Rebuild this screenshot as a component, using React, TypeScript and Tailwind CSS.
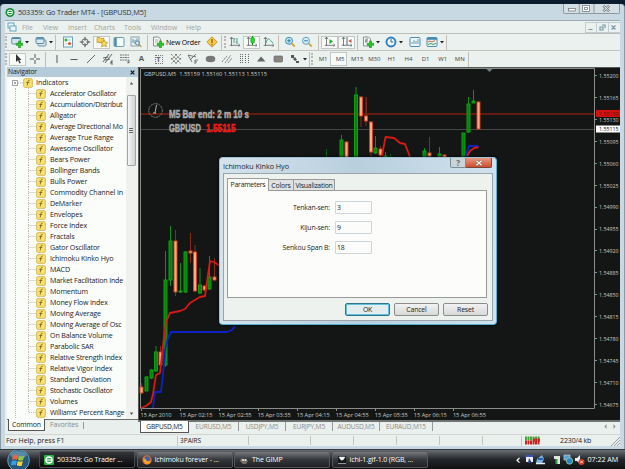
import type { ReactNode } from "react"
import clsx from "clsx"

const indicators = [
  "Accelerator Oscillator", "Accumulation/Distribut", "Alligator", "Average Directional Mo", "Average True Range",
  "Awesome Oscillator", "Bears Power", "Bollinger Bands", "Bulls Power", "Commodity Channel In", "DeMarker",
  "Envelopes", "Force Index", "Fractals", "Gator Oscillator", "Ichimoku Kinko Hyo", "MACD", "Market Facilitation Inde",
  "Momentum", "Money Flow Index", "Moving Average", "Moving Average of Osc", "On Balance Volume", "Parabolic SAR",
  "Relative Strength Index", "Relative Vigor Index", "Standard Deviation", "Stochastic Oscillator", "Volumes",
  "Williams' Percent Range",
]

const prices = ["1.55200", "1.55165", "1.55130", "1.55095", "1.55060", "1.55025", "1.54990", "1.54955", "1.54920", "1.54885", "1.54850", "1.54815", "1.54780", "1.54745", "1.54710", "1.54675"]
const times = ["15 Apr 2010", "15 Apr 02:15", "15 Apr 02:55", "15 Apr 03:35", "15 Apr 04:15", "15 Apr 04:55", "15 Apr 05:35", "15 Apr 06:15", "15 Apr 06:55"]

// x, wick top, body top, body bottom, wick bottom, up
const candles: [number, number, number, number, number, boolean][] = [
  [141.5, 383, 387, 393, 394, false],
  [146.5, 376, 377, 391, 391, true],
  [151.5, 369, 370, 378, 379, true],
  [156, 346, 352, 371, 372, true],
  [160.5, 346, 352, 365, 371, false],
  [165.5, 251, 280, 365, 367, true],
  [170.5, 226, 241, 280, 286, true],
  [175.5, 230, 241, 292, 296, false],
  [180.5, 263, 291, 292, 293, true],
  [185.5, 251, 252, 292, 293, true],
  [190.5, 233, 251, 253, 263, false],
  [195, 245, 252, 291, 292, false],
  [200, 268, 285, 293, 294, true],
  [204.5, 285, 286, 290, 291, false],
  [209.5, 256, 277, 289, 290, true],
  [214.5, 258, 277, 280, 281, false],
  [341.5, 135, 140, 160, 160, true],
  [346.5, 141, 142, 160, 160, false],
  [356, 87, 95, 160, 160, true],
  [361, 96, 97, 116, 127, false],
  [366, 97, 116, 121, 126, false],
  [371, 121, 122, 152, 158, false],
  [375.5, 136, 148, 153, 154, true],
  [380.5, 146, 149, 155, 158, false],
  [385.5, 152, 156, 160, 160, true],
  [424.5, 148, 151, 157, 160, true],
  [429.5, 137, 153, 156, 160, false],
  [439.5, 147, 154, 156, 160, true],
  [444.5, 154, 155, 157, 160, false],
  [463.5, 133, 133, 160, 160, true],
  [468.5, 97, 104, 132, 133, true],
  [473.5, 90, 101, 103, 103, true],
  [478.5, 101, 102, 129, 130, false],
]

const Icon = ({ children, on }: { children: ReactNode; on?: boolean }) => (
  <span className={clsx("flex h-[13px] w-[17px] shrink-0 items-center justify-center", on && "border border-[#c3c7c7] bg-[#f8faf8]")}>
    <svg width="12" height="12" viewBox="0 0 12 12" className="shrink-0" fill="none">{children}</svg>
  </span>
)

const Caret = () => (
  <svg width="4" height="4" viewBox="0 0 4 4" className="shrink-0"><path d="M0 1h4L2 3.4z" fill="#222" /></svg>
)

const Sep = () => <i className="h-[15px] w-px shrink-0 bg-[#c4bdb5]" />
const Grip = () => <i className="h-[12px] w-[2px] shrink-0 border-l-2 border-dotted border-[#b9b6b0]" />

const Plus = () => <path d="M7.500 5h2v2.300h2.300v2H9.500v2.400h-2V9.300H5.200v-2h2.300z" fill="#22cc22" stroke="#168a16" strokeWidth=".6" />
const Axes = () => <path d="M2.500 1v9M.8 9.300h10M1 3l1.500-2L4 3M9.500 8l1.500 1.300-1.500 1.300" stroke="#6d7373" strokeWidth=".9" />

const MainToolbar = () => (
  <div className="flex h-[17px] items-center border-t border-[#bdbdb8] bg-[#ebf1ee]">
    <Grip />
    <span className="flex w-[18px] items-center justify-end">
      <Icon><rect x=".7" y="1.500" width="9" height="6.500" rx="1" fill="#cfe4ee" stroke="#6792a5" /><path d="M1 2.500h8" stroke="#4b86a3" /><Plus /></Icon>
    </span>
    <Caret />
    <span className="ml-[3px] flex items-center">
      <Icon><rect x="3" y="4" width="8" height="6" rx="1" fill="#d8e8ef" stroke="#6f91a0" /><rect x="1" y="1.500" width="8" height="6" rx="1" fill="#d8e8ef" stroke="#5e8ba0" /><path d="M1 2.800h8" stroke="#5e96b3" strokeWidth="1.500" /></Icon>
    </span>
    <Caret />
    <span className="ml-[2px] mr-[3px] flex"><Sep /></span>
    <Icon><rect x="1.500" y="1" width="9" height="10" fill="#f6fbfb" stroke="#6ba0b4" /><circle cx="4" cy="4" r="1.500" fill="#2fae3c" /><circle cx="7.500" cy="7.500" r="1.600" fill="#e4542f" /><path d="M6 4h3M3 8h2" stroke="#7fb0c3" strokeWidth=".7" /></Icon>
    <Icon><circle cx="6" cy="6" r="3.200" stroke="#666" /><path d="M6 .8v4M6 7.200v4M.8 6h4M7.200 6h4" stroke="#555" /></Icon>
    <Icon on><path d="M1 1.500h3l1 1h3v4H1z" fill="#f3cf4a" stroke="#b5912b" strokeWidth=".7" /><path d="M8 4l1.200 2.200 2.500.3-1.800 1.800.4 2.500L8 9.600l-2.300 1.200.4-2.500-1.800-1.800 2.500-.3z" fill="#fbdc5a" stroke="#aa8a28" strokeWidth=".7" /></Icon>
    <Icon><rect x="1" y="1.500" width="10" height="9" rx="1" fill="#f5fafb" stroke="#6d9bb0" /><path d="M2.500 2v8" stroke="#4489ad" strokeWidth="2.400" /></Icon>
    <Icon><rect x="1" y="1" width="8" height="9" fill="#e7eff1" stroke="#8ba4ad" /><path d="M3 3v4M5 4v4M7 2.500v3" stroke="#5f8ea5" /><circle cx="7.500" cy="7" r="2" stroke="#6788a0" /><path d="M9 8.500l2.300 2.300" stroke="#b99b45" strokeWidth="1.400" /></Icon>
    <span className="ml-[3px] mr-[1px] flex"><Sep /></span>
    <Icon><path d="M1.500 1h5l2 2v7h-7z" fill="#f4f7f5" stroke="#777" strokeWidth=".8" /><path d="M3 4h4M3 6h3" stroke="#999" strokeWidth=".7" /><Plus /></Icon>
    <span className="w-[37px] shrink-0 whitespace-nowrap text-[7px] tracking-[-0.160px] text-black">New Order</span>
    <Icon><path d="M6 .8L11.200 6 6 11.200.8 6z" fill="#f7ca47" stroke="#c7952b" /><path d="M6 3v4M6 8v1.300" stroke="#89651b" strokeWidth="1.300" /></Icon>
    <span className="ml-[1px] mr-[2px] flex"><Sep /></span>
    <Grip />
    <Icon><Axes /><path d="M5 2v5M5 3h1.300M8 2v6M6.700 6H8" stroke="#3e9484" strokeWidth=".9" /></Icon>
    <Icon on><Axes /><path d="M6.500 0v9" stroke="#168d1b" /><rect x="4.800" y="1.500" width="3.600" height="5.500" rx="1" fill="#27dc2b" stroke="#168d1b" strokeWidth=".6" /></Icon>
    <Icon><Axes /><path d="M3 7c1.500-5 3-5 4.500-2.500L10 7" stroke="#4d9b8b" /></Icon>
    <span className="ml-[1px] mr-[2px] flex"><Sep /></span>
    <Icon><circle cx="5" cy="4.800" r="3.500" fill="#cce9f6" stroke="#3989b3" /><path d="M5 3v3.600M3.200 4.800h3.600" stroke="#26749d" /><path d="M7.800 7.500l3 3" stroke="#d2ac42" strokeWidth="2" /></Icon>
    <Icon><circle cx="5" cy="4.800" r="3.500" fill="#d8edf6" stroke="#5b9fc1" /><path d="M3.200 4.800h3.600" stroke="#26749d" /><path d="M7.800 7.500l3 3" stroke="#d2ac42" strokeWidth="2" /></Icon>
    <span className="ml-[3px] mr-[2px] flex"><Sep /></span>
    <Icon on><Axes /><path d="M5.500 3v5l3.500-2.500z" fill="#1eaa29" /></Icon>
    <Icon on><Axes /><path d="M6 1v8" stroke="#4c6b78" /><path d="M10.500 3v4L7.300 5z" fill="#d05a45" /></Icon>
    <span className="ml-[2px] mr-[1px] flex"><Sep /></span>
    <Icon><path d="M1.500 1h5l2 2v7h-7z" fill="#f4f7f5" stroke="#777" strokeWidth=".8" /><path d="M4 7V3h2M3 5h3" stroke="#666" strokeWidth=".8" /><Plus /></Icon>
    <Caret />
    <span className="ml-[2px] flex items-center">
      <Icon><circle cx="6" cy="6" r="4.500" fill="#edf8fd" stroke="#2d7fc4" strokeWidth="1.900" /><path d="M6 3v3h2.300" stroke="#466" /></Icon>
    </span>
    <Caret />
    <span className="ml-[3px] flex items-center">
      <Icon><rect x="1" y="1.500" width="10" height="9" rx="1" fill="#edf7fb" stroke="#4f8cab" /><path d="M3 8V6M5 8V4M7 8V5M9 8V3" stroke="#6b9ab0" /></Icon>
      <Icon><rect x="1" y="1.500" width="10" height="9" rx="1" fill="#edf7fb" stroke="#4f8cab" /><path d="M1 2.800h10" stroke="#438bb5" strokeWidth="2" /><path d="M2 6l2-1 2 1 3-1.500" stroke="#c6603d" /><path d="M2 8.500l3-1 2 1 3-1" stroke="#3d9a47" /></Icon>
    </span>
    <Caret />
    <span className="ml-[2px] flex"><Sep /></span>
  </div>
)

const LineToolbar = () => (
  <div className="flex h-[17px] items-center border-t border-[#c6c3bd] bg-[#ebf1ee]">
    <Grip />
    <span className="ml-[2px] flex"><Icon on><path d="M4 1v8l2-1.700 1.500 3.200 1.300-.6-1.500-3H9.500z" fill="#333" /></Icon></span>
    <Icon><path d="M6 1v4M6 7v4M1 6h4M7 6h4" stroke="#555" /></Icon>
    <span className="ml-[2px] mr-[2px] flex"><Sep /></span>
    <Icon><path d="M6 2v8" stroke="#555" /></Icon>
    <Icon><path d="M2.500 6.500h7" stroke="#555" /></Icon>
    <Icon><path d="M2 10l8-8" stroke="#666" /></Icon>
    <Icon><path d="M1 9l6-8M3 10l7-9M1 5l5-1M3 7l5-1M9 8v3M9 8h2M9 9.500h1.500M9 11h2" stroke="#555" strokeWidth=".9" /></Icon>
    <Icon><path d="M1 2h9M1 4.500h9M1 7h9M9 8v3M9 8h2M9 9.500h1.500" stroke="#6a6a6a" strokeWidth=".9" strokeDasharray="2 .5" /></Icon>
    <span className="w-[17px] text-center font-['Liberation_Sans'] text-[8px] font-bold text-[#555]">A</span>
    <span className="flex w-[17px] justify-center"><b className="h-[9px] w-[8px] border border-dotted border-[#777] text-center font-['Liberation_Sans'] text-[7px] leading-[8px] text-[#555]">T</b></span>
    <Icon><path d="M1 1l10 10M1 5l6 6M5 1l6 6M11 1L1 11M7 1L1 7M11 5l-6 6" stroke="#777" strokeDasharray="1.400 .6" /></Icon>
    <Icon><path d="M1 2l8 2M1 2l4 7M3 7l6-6M8 7v4M8 7h3M8 9h2" stroke="#666" strokeWidth=".9" /></Icon>
    <Icon><ellipse cx="6.500" cy="6" rx="4.800" ry="3.300" fill="#777" /></Icon>
    <Icon><path d="M1 9l5-6M4 10l6-8M7 10l4-5" stroke="#777" strokeDasharray="1.500 .5" /></Icon>
    <Icon><path d="M2.500 1v10M4.500 1v10M7.500 1v10M10.500 1v10" stroke="#666" strokeDasharray="1 1" /></Icon>
    <Icon><path d="M2 8.500l4-5 4.500 5z" fill="#666" /></Icon>
    <Icon><rect x="2" y="3" width="8.500" height="6" rx="1" fill="#8b8582" stroke="#666" strokeWidth=".7" /></Icon>
    <Icon><path d="M2 2h3v3H2zM4 6l2-2 2 3-2 1zM7 8h3v2H7z" fill="#555" /></Icon>
    <Caret />
    <span className="ml-[2px] mr-[1px] flex"><Sep /></span>
    <Grip />
    {["M1", "M5", "M15", "M30", "H1", "H4", "D1", "W1", "MN"].map((tf) => (
      <span key={tf} className={clsx("flex h-[14px] w-[17.100px] shrink-0 items-center justify-center pl-[3px] text-[6px] text-[#444]", tf === "M5" && "border border-[#c3c7c7] bg-[#f8faf8]")}>{tf}</span>
    ))}
    <span className="ml-[1px] flex"><Sep /></span>
  </div>
)

const IndicatorIcon = () => (
  <svg width="10" height="10" viewBox="0 0 10 10" className="shrink-0">
    <rect x=".7" y=".7" width="8.600" height="8.600" rx="1" fill="#f9e272" stroke="#d3b44a" strokeWidth=".9" />
    <path d="M6.700 2.300c-1.300-.4-1.600.3-1.800 1.500L4.200 7.500M3.300 4.500h3" fill="none" stroke="#7d661f" strokeWidth=".9" />
  </svg>
)

const Navigator = () => (
  <aside className="flex w-[131px] shrink-0 flex-col">
    <header className="flex h-[10px] items-center justify-between bg-[#b5cbda] pl-[1px] pr-[3px] text-[6.700px] tracking-[-0.150px] text-[#222]">
      Navigator
      <svg width="5" height="5" viewBox="0 0 5 5"><path d="M.7.7l3.600 3.600M4.300.7L.7 4.300" stroke="#111" strokeWidth="1.200" /></svg>
    </header>
    <div className="flex h-[342px] bg-[#fbfdfa]">
      <div className="w-[119px] overflow-hidden">
        <div className="flex h-[11px] items-center pl-[5px] text-[7.100px] tracking-[-0.060px] text-[#222]">
          <svg width="11" height="10" viewBox="0 0 11 10"><rect x=".5" y="2.500" width="5" height="5" fill="#fff" stroke="#9ca6aa" /><path d="M2 5h2" stroke="#555" /><path d="M6 5h5" stroke="#bbb" strokeDasharray="1 1" /></svg>
          <IndicatorIcon />
          <span className="ml-[3px]">Indicators</span>
        </div>
        <div className="ml-[7.500px] border-l border-dotted border-[#c0b8b0]">
          {indicators.map((name, i) => (
            <div key={name} className="flex h-[11px] items-center text-[7.100px] tracking-[-0.130px] text-[#222]">
              <svg width="20" height="11" viewBox="0 0 20 11" className="shrink-0">
                <path d={i === indicators.length - 1 ? "M12.500 0v5.500h7" : "M12.500 0v11M12.500 5.500h7"} fill="none" stroke="#c0b8b0" strokeDasharray="1 1" />
              </svg>
              <IndicatorIcon />
              <span className={clsx("ml-[4.500px] whitespace-nowrap", name.length > 20 && "tracking-[-0.190px]")}>{name}</span>
            </div>
          ))}
        </div>
      </div>
      <div className="flex w-[10px] flex-col items-center bg-[#eef1ee]">
        <svg width="5" height="18" viewBox="0 0 5 18"><path d="M.8 7.500L2.500 5l1.700 2.500z" fill="#555" /></svg>
        <div className="flex h-[71px] w-[9px] flex-col items-center justify-center gap-px rounded-[1px] border border-[#a0a5a7] bg-gradient-to-r from-[#f6f6f6] to-[#cfd3d5]">
          <i className="h-px w-[4px] bg-[#666]" /><i className="h-px w-[4px] bg-[#666]" /><i className="h-px w-[4px] bg-[#666]" />
        </div>
        <svg width="5" height="5" viewBox="0 0 5 5" className="mb-[3px] mt-auto"><path d="M.8 1.500h3.500L2.500 4z" fill="#555" /></svg>
      </div>
      <i className="w-[2px] bg-[#eef1ee]" />
    </div>
    <div className="flex h-[15px] border-t border-[#6e6e6e] bg-[#e9efec] text-[6.900px] leading-[10px] tracking-[-0.100px]">
      <span className="-mt-px ml-[1px] h-[12px] w-[37px] border border-t-0 border-[#555] bg-[#fcfdfb] text-center leading-[11px] text-[#222]">Common</span>
      <span className="ml-[5px] text-[#8a8a86]">Favorites</span>
      <i className="ml-[5px] mt-[2px] h-[7px] w-px bg-[#999]" />
    </div>
  </aside>
)

const Chart = () => (
  <svg width="482" height="353" viewBox="138 67 482 353" className="block font-['Open_Sans',sans-serif]">
    <rect x="138" y="67" width="482" height="353" fill="#131615" />
    <path d="M138.500 420V67.500H620" fill="none" stroke="#555855" />
    <path d="M140.500 408.500V68.500H594.500V408.500Z" fill="none" stroke="#8b8d8b" />
    <path d="M141 114h453" stroke="#641c10" strokeWidth="2" />
    <path d="M141 129.500h453" stroke="#444846" />
    <path d="M486.500 69h6l-3 3z" fill="#72818e" />
    <path d="M366.500 97v19M190.500 233v30M219.500 280v19" stroke="#702415" />
    <path d="M326.500 149v8M390.500 154v4" stroke="#0b5e10" />
    {candles.map(([x, wt, bt, bb, wb, up]) => (
      <g key={x}>
        <path d={`M${x} ${wt}V${wb}`} stroke={up ? "#0c930f" : "#8c2a19"} />
        <rect x={x - 1.5} y={bt} width="3" height={bb - bt} fill={up ? "#0a7f10" : "#ffab7d"} stroke={up ? "#0cab10" : "#ce4429"} strokeWidth=".9" />
      </g>
    ))}
    <g fill="none" strokeWidth="1.800" strokeLinejoin="round">
      <path d="M153 408L155 392H161L163 375L165 350L168 338L171 332H227L232 330L235 326" stroke="#0c22c4" />
      <path d="M465 158L469 146H478.500" stroke="#0c22c4" />
      <path d="M141 408L146 406L151 402L153 394L156 375L160 373L163 345L166 322L170 313L180 311L185 309L190 303L200 297L205 296L208 275L210 261L214 262L220 266" stroke="#d91a12" />
      <path d="M382 156L385.500 137L394 138L400 143L405 144L410 157M467 156L470 151L475 147.500H478.500" stroke="#d91a12" />
    </g>
    <g fill="none" stroke="#777b7b">
      <circle cx="155.500" cy="110.500" r="6.800" strokeDasharray="2 .7" />
      <path d="M156.500 105l-1.500 8M153 113h3" stroke="#c5c5c5" strokeWidth=".9" />
    </g>
    <g fontFamily="'Liberation Sans'" fontWeight="bold" fontSize="11" strokeWidth=".5">
      <text x="169" y="117.500" textLength="80" lengthAdjust="spacingAndGlyphs" fill="#a9aba9" stroke="#a9aba9">M5 Bar end: 2 m 10 s</text>
      <text x="169" y="132" textLength="32" lengthAdjust="spacingAndGlyphs" fill="#a9aba9" stroke="#a9aba9">GBPUSD</text>
      <text x="206" y="132" textLength="29.500" lengthAdjust="spacingAndGlyphs" fill="#f01c18" stroke="#f01c18">1.55115</text>
    </g>
    <g fill="#c9cbc9" fontSize="6">
      <text x="144" y="75.700" textLength="123" lengthAdjust="spacingAndGlyphs" xmlSpace="preserve">GBPUSD,M5  1.55159 1.55160 1.55113 1.55115</text>
      {prices.map((p, i) => (
        <g key={p}>
          <path d={`M595 ${75.5 + Math.round(i * 21.93)}h2`} stroke="#8b8d8b" />
          <text x="599" y={77.9 + i * 21.93} textLength="19.500" lengthAdjust="spacingAndGlyphs">{p}</text>
        </g>
      ))}
      {times.map((t, i) => (
        <g key={t}>
          <path d={`M${Math.round(141 + i * 39)}.5 409v2`} stroke="#8b8d8b" />
          <text x={140.5 + i * 39.05} y="416.500" textLength={i === 0 ? 31 : 33} lengthAdjust="spacingAndGlyphs">{t}</text>
        </g>
      ))}
    </g>
    <rect x="596" y="110" width="24" height="7" fill="#d3110e" />
    <text x="599" y="115.900" fontSize="6" fill="#691311" textLength="19.500" lengthAdjust="spacingAndGlyphs">1.55139</text>
    <rect x="596" y="125.500" width="24" height="7" fill="#fff" />
    <text x="599" y="131.300" fontSize="6" fill="#111" textLength="19.500" lengthAdjust="spacingAndGlyphs">1.55115</text>
  </svg>
)

const Field = ({ label, value }: { label: string; value: string }) => (
  <label className="flex h-[20px] items-start">
    <span className="w-[102px] pt-[1px] text-right leading-[12px]">{label}</span>
    <span className="ml-[5px] h-[13px] w-[37px] rounded-[1px] border border-[#cbd5da] pl-[1px] leading-[11px]">{value}</span>
  </label>
)

const Dialog = () => (
  <section className="absolute left-[219px] top-[157px] flex h-[168px] w-[278px] flex-col rounded-[4px] border border-[#9fc3d6] border-b-[#52b4d2] border-r-[#52b4d2] bg-gradient-to-r from-[#d5e3ec] via-[#b9cfde] to-[#d0e2ed] px-[3px] pb-[3px] text-[6.900px] tracking-[-0.170px] text-[#222] shadow-[0_0_3px_#000]">
    <header className="flex h-[15px] shrink-0 items-start">
      <h1 className="pt-[3px] text-[7.200px] leading-[10px] tracking-[-0.030px]">Ichimoku Kinko Hyo</h1>
      <span className="ml-auto flex h-[10px] w-[16px] items-center justify-center rounded-bl-[2px] border border-t-0 border-[#7e8b92] bg-[#c9d4d9]">
        <b className="text-[8px] leading-none text-[#626c72]">?</b>
      </span>
      <span className="mr-[1px] flex h-[10px] w-[26px] items-center justify-center rounded-br-[2px] border border-l-0 border-t-0 border-[#78483d] bg-gradient-to-b from-[#e39a84] to-[#ce4d29]">
        <svg width="8" height="6" viewBox="0 0 8 6"><path d="M1.500.7l5 4.600M6.500.7l-5 4.600" stroke="#7d554c" strokeWidth="2.400" /><path d="M1.500.7l5 4.600M6.500.7l-5 4.600" stroke="#fff" strokeWidth="1.300" /></svg>
      </span>
    </header>
    <div className="flex flex-1 flex-col border border-[#9aa5ab] bg-[#edf2ef] px-[3px] pt-[4px]">
      <div className="flex h-[12px] items-end">
        <span className="relative -mb-px h-[13px] w-[42px] border border-b-0 border-[#9b9b9b] bg-[#fcfdfb] text-center leading-[11px] tracking-[-0.250px]">Parameters</span>
        <span className="h-[11px] w-[25px] border border-b-0 border-l-0 border-[#999] bg-[#dfe2e1] text-center leading-[11px]">Colors</span>
        <span className="h-[11px] w-[41px] border border-b-0 border-l-0 border-[#999] bg-[#dfe2e1] text-center leading-[11px] tracking-[-0.250px]">Visualization</span>
      </div>
      <div className="h-[108px] w-[260px] border border-[#999] bg-[#fcfdfb] pt-[10px]">
        <Field label="Tenkan-sen:" value="3" />
        <Field label="Kijun-sen:" value="9" />
        <Field label="Senkou Span B:" value="18" />
      </div>
      <div className="mt-[5px] flex justify-end gap-[4px] pr-[2px] leading-[11px]">
        <button className="h-[13px] w-[45px] rounded-[2px] border border-[#31728e] bg-[#e3edf0] shadow-[inset_0_0_0_1px_#62c1df]">OK</button>
        <button className="h-[13px] w-[45px] rounded-[2px] border border-[#8c8c8c] bg-gradient-to-b from-[#f1f2f1] to-[#d8dad9]">Cancel</button>
        <button className="-mr-[1px] h-[13px] w-[45px] rounded-[2px] border border-[#8c8c8c] bg-gradient-to-b from-[#f1f2f1] to-[#d8dad9]">Reset</button>
      </div>
    </div>
  </section>
)

const StatusBar = () => (
  <footer className="flex h-[12px] items-center border-t border-[#d4d5d0] bg-[#eaf0ed] text-[7px] tracking-[-0.120px] text-[#222]">
    <span className="w-[172px] pl-[1px] tracking-[0px]">For Help, press F1</span>
    <span className="h-[10px] w-[71px] border-l border-[#c8c5bf] pl-[2px] text-[6.500px] leading-[9px] tracking-[0px]">3PAIRS</span>
    <i className="h-[9px] w-[62px] border-l border-[#c8c5bf]" />
    <i className="h-[9px] w-[43px] border-l border-[#c8c5bf]" />
    <i className="h-[9px] w-[43px] border-l border-[#c8c5bf]" />
    <i className="h-[9px] w-[43px] border-l border-[#c8c5bf]" />
    <i className="h-[9px] w-[43px] border-l border-[#c8c5bf]" />
    <i className="h-[9px] w-[39px] border-l border-[#c8c5bf]" />
    <span className="flex h-[10px] items-center border-l border-[#c8c5bf] pl-[3px]">
      <svg width="15" height="9" viewBox="0 0 15 9">
        <path d="M0 2.500h15" stroke="#4aa33a" strokeWidth="4" strokeDasharray="2 .5" />
        <path d="M0 6.500h15" stroke="#c32421" strokeWidth="4" strokeDasharray="2 .5" />
        <path d="M8 4h7" stroke="#c32421" strokeWidth="3" strokeDasharray="2 .5" />
      </svg>
    </span>
    <span className="ml-[20px] whitespace-nowrap">2230/4 kb</span>
    <svg width="10" height="10" viewBox="0 0 10 10" className="ml-auto"><path d="M1 10l9-9M4 10l6-6M7 10l3-3" stroke="#9a9d9d" /></svg>
  </footer>
)

const TaskButton = ({ children, icon, active }: { children: string; icon: ReactNode; active?: boolean }) => (
  <div className={clsx("flex h-[17px] w-[96px] shrink-0 items-center gap-[3px] rounded-[2px] border pl-[4px] text-[7px] tracking-[-0.120px]", active ? "border-[#4b4e51] bg-gradient-to-b from-[#33373a] to-[#08090a]" : "border-[#55595d] bg-gradient-to-b from-[#777b80] via-[#35383c] to-[#1f2123]")}>
    {icon}
    <span className="whitespace-nowrap text-white">{children}</span>
  </div>
)

const Taskbar = () => (
  <div className="flex h-[20px] items-center border-t border-[#33373a] bg-gradient-to-b from-[#6b7075] via-[#23262a] to-[#0e1011] text-white">
    <svg width="32" height="20" viewBox="0 0 32 20" className="ml-[3px] shrink-0">
      <circle cx="15.500" cy="10.500" r="10.800" fill="#24587d" stroke="#76a1b4" strokeWidth="1" />
      <ellipse cx="15.500" cy="5" rx="8" ry="4" fill="#6f9fb9" opacity=".7" />
      <path d="M10 5.500q2.500-1.500 5 0l-1 4.300q-2.500-1-5 .2z" fill="#ef6435" />
      <path d="M16 5.700q2.500 1.300 5.300 0l-1.200 4.400q-2.500 1.200-5-.2z" fill="#8dc63f" />
      <path d="M8.800 11q2.500-1.200 5 0l-1 4.300q-2.500-1-5 .2z" fill="#3b9fe3" />
      <path d="M14.800 11.100q2.500 1.200 5 0l-1 4.300q-2.500 1.200-5-.2z" fill="#f8d12e" />
    </svg>
    <div className="ml-[4px] flex gap-[1.500px]">
      <TaskButton active icon={<svg width="10" height="10" viewBox="0 0 10 10"><rect width="10" height="10" rx="1" fill="#2bb34a" /><circle cx="5" cy="5" r="3" fill="none" stroke="#fff" strokeWidth="1.500" /><path d="M2 5h5" stroke="#fff" /></svg>}>503359: Go Trader ...</TaskButton>
      <TaskButton icon={<svg width="10" height="10" viewBox="0 0 10 10"><circle cx="5" cy="5" r="4.700" fill="#e56b22" /><circle cx="5.300" cy="4" r="2.800" fill="#3567b0" /><path d="M1 3q2 0 4 3 2 1 4-1-1 4-4 4T1 3" fill="#f7a42c" /></svg>}>Ichimoku forever - ...</TaskButton>
      <TaskButton icon={<svg width="10" height="10" viewBox="0 0 10 10"><path d="M2 3l2 1h3l2 2-2 3H4L1 6z" fill="#777064" /><circle cx="4" cy="5" r="1" fill="#eee" /><circle cx="6.500" cy="5" r="1" fill="#eee" /></svg>}>The GIMP</TaskButton>
      <TaskButton icon={<svg width="10" height="10" viewBox="0 0 10 10"><path d="M1 1h8v7H1z" fill="#16191a" /><path d="M2 2h6L6 5H4zM1 8.500h8" fill="#fff" stroke="#ddd" strokeWidth=".6" /></svg>}>ichi-1.gif-1.0 (RGB, ...</TaskButton>
    </div>
    <div className="ml-auto flex items-center pr-[7px]">
      <svg width="72" height="12" viewBox="514 0 72 12">
        <path d="M518.500 4L516 6.300l2.500 2.300" fill="none" stroke="#fff" strokeWidth="1.200" />
        <path d="M525 2h7v6h-7z" fill="#eef" /><path d="M524 2h8" stroke="#3556be" strokeWidth="2" /><path d="M527 9l1-5 3 5z" fill="#283e82" />
        <path d="M536 5l5-4 2 4-2 4h-6z" fill="#77b4e4" /><path d="M535 9.500h9" stroke="#e4f1ff" strokeWidth="1.500" /><path d="M537 5h5" stroke="#2461b2" strokeWidth="2" />
        <path d="M553 2h6v8h-4v-5h-2z" fill="#dfe5df" /><path d="M555.500 5v5" stroke="#3a9d44" strokeWidth="2" />
        <rect x="563" y="1" width="6" height="5" fill="#569ed4" stroke="#ddd" strokeWidth=".6" /><circle cx="568.500" cy="7" r="3.200" fill="#2787c5" stroke="#9dd6aa" strokeWidth=".7" />
        <path d="M574 4h2l3-3v9l-3-3h-2z" fill="#eee" /><circle cx="580.500" cy="8" r="3" fill="#d93822" /><path d="M579.300 6.800l2.400 2.400M581.700 6.800l-2.400 2.400" stroke="#fff" strokeWidth=".8" />
      </svg>
      <span className="ml-[1px] whitespace-nowrap text-[7.200px] tracking-[-0.100px]">07:22 AM</span>
    </div>
  </div>
)

export default function App() {
  return (
    <div className="relative h-[469px] w-[625px] overflow-hidden bg-[#0b1c2e] pt-[4px] font-['Open_Sans',sans-serif] leading-none">
      <main className="flex h-[445px] flex-col rounded-t-[4px] border-x border-[#8a9aa5] bg-[#c9d9e4] px-[4px]">
        <header className="flex h-[16px] shrink-0 items-start">
          <svg width="10" height="16" viewBox="0 0 10 16"><circle cx="5" cy="8.500" r="4.500" fill="#178c35" /><circle cx="5" cy="8.500" r="2.500" fill="none" stroke="#fff" /><path d="M3 8.500h4" stroke="#fff" /></svg>
          <h1 className="ml-[3px] whitespace-nowrap pt-[4px] text-[7.300px] leading-[9px] tracking-[-0.120px] text-[#2c3339]">503359: Go Trader MT4 - [GBPUSD,M5]</h1>
          <div className="ml-auto flex h-[10px] w-[57px] rounded-b-[2px] border border-t-0 border-[#8f999e] bg-[#d4dfe5]">
            <svg width="56" height="9" viewBox="0 0 56 9" fill="none"><path d="M15.500 0v9M30.500 0v9" stroke="#8f999e" /><rect x="4.500" y="4.500" width="7" height="2.500" fill="#fff" stroke="#727a7e" strokeWidth=".8" /><rect x="19" y="1.500" width="7" height="6" fill="#fff" stroke="#727a7e" strokeWidth=".8" /><rect x="21" y="3.500" width="3" height="2" stroke="#727a7e" strokeWidth=".8" /><path d="M40 1.500l6 6M46 1.500l-6 6" stroke="#727a7e" strokeWidth="2.400" /><path d="M40 1.500l6 6M46 1.500l-6 6" stroke="#fff" /></svg>
          </div>
        </header>
        <nav className="flex h-[13px] shrink-0 items-center border-t border-[#9eabb3] bg-[#ebf1ee] text-[7px] tracking-[-0.050px] text-[#a6a39c]">
          <svg width="10" height="10" viewBox="0 0 10 10" className="ml-[2px]"><rect x="1" y="1" width="6" height="5" fill="#e8f5fa" stroke="#69a5c2" /><rect x="3" y="4" width="6" height="5" fill="#e8f5fa" stroke="#69a5c2" /></svg>
          <span className="ml-[5px] w-[21px]">File</span>
          <span className="w-[25px]">View</span>
          <span className="w-[26px]">Insert</span>
          <span className="w-[30px]">Charts</span>
          <span className="w-[27px]">Tools</span>
          <span className="w-[35px]">Window</span>
          <span>Help</span>
          <svg width="36" height="11" viewBox="0 0 36 11" fill="none" className="ml-auto">
            <path d="M1.500 0v11M12.500 0v11M24.500 0v11M1 .5h35M1 10.500h35" stroke="#c1ced5" />
            <path d="M4.500 7.500h4M16 5h3v3h-3zM18 3h3v3M27.500 3.500l4 4M31.500 3.500l-4 4" stroke="#7898a7" strokeWidth="1.200" />
          </svg>
        </nav>
        <MainToolbar />
        <LineToolbar />
        <div className="flex h-[367px] shrink-0 bg-[#e9efec]">
          <i className="w-[2px] shrink-0" />
          <Navigator />
          <div className="flex w-[482px] shrink-0 flex-col">
            <Chart />
            <div className="flex h-[14px] items-start border-t-2 border-[#6f7371] bg-[#eaf0ed] text-[6.600px] leading-[9px] tracking-[-0.150px] text-[#8f8c86]">
              <span className="-mt-px ml-[2px] h-[12px] w-[49px] shrink-0 border border-t-0 border-[#555] bg-[#fcfdfb] text-center leading-[11px] text-[#222]">GBPUSD,M5</span>
              {["EURUSD,M5", "USDJPY,M5", "EURJPY,M5", "AUDUSD,M5", "EURAUD,M15"].map((s) => (
                <span key={s} className={clsx("flex h-[9px] shrink-0 items-center justify-center whitespace-nowrap border-r border-[#999]", s === "EURAUD,M15" ? "w-[53px]" : s === "EURUSD,M5" ? "w-[50px]" : "w-[47px]")}>{s}</span>
              ))}
              <svg width="20" height="9" viewBox="0 0 20 9" className="ml-auto"><path d="M6.500 2L4.500 4.500l2 2.500zM13.500 2l2 2.500-2 2.500z" fill="#8c918f" /></svg>
            </div>
          </div>
        </div>
        <StatusBar />
      </main>
      <Taskbar />
      <Dialog />
    </div>
  )
}
